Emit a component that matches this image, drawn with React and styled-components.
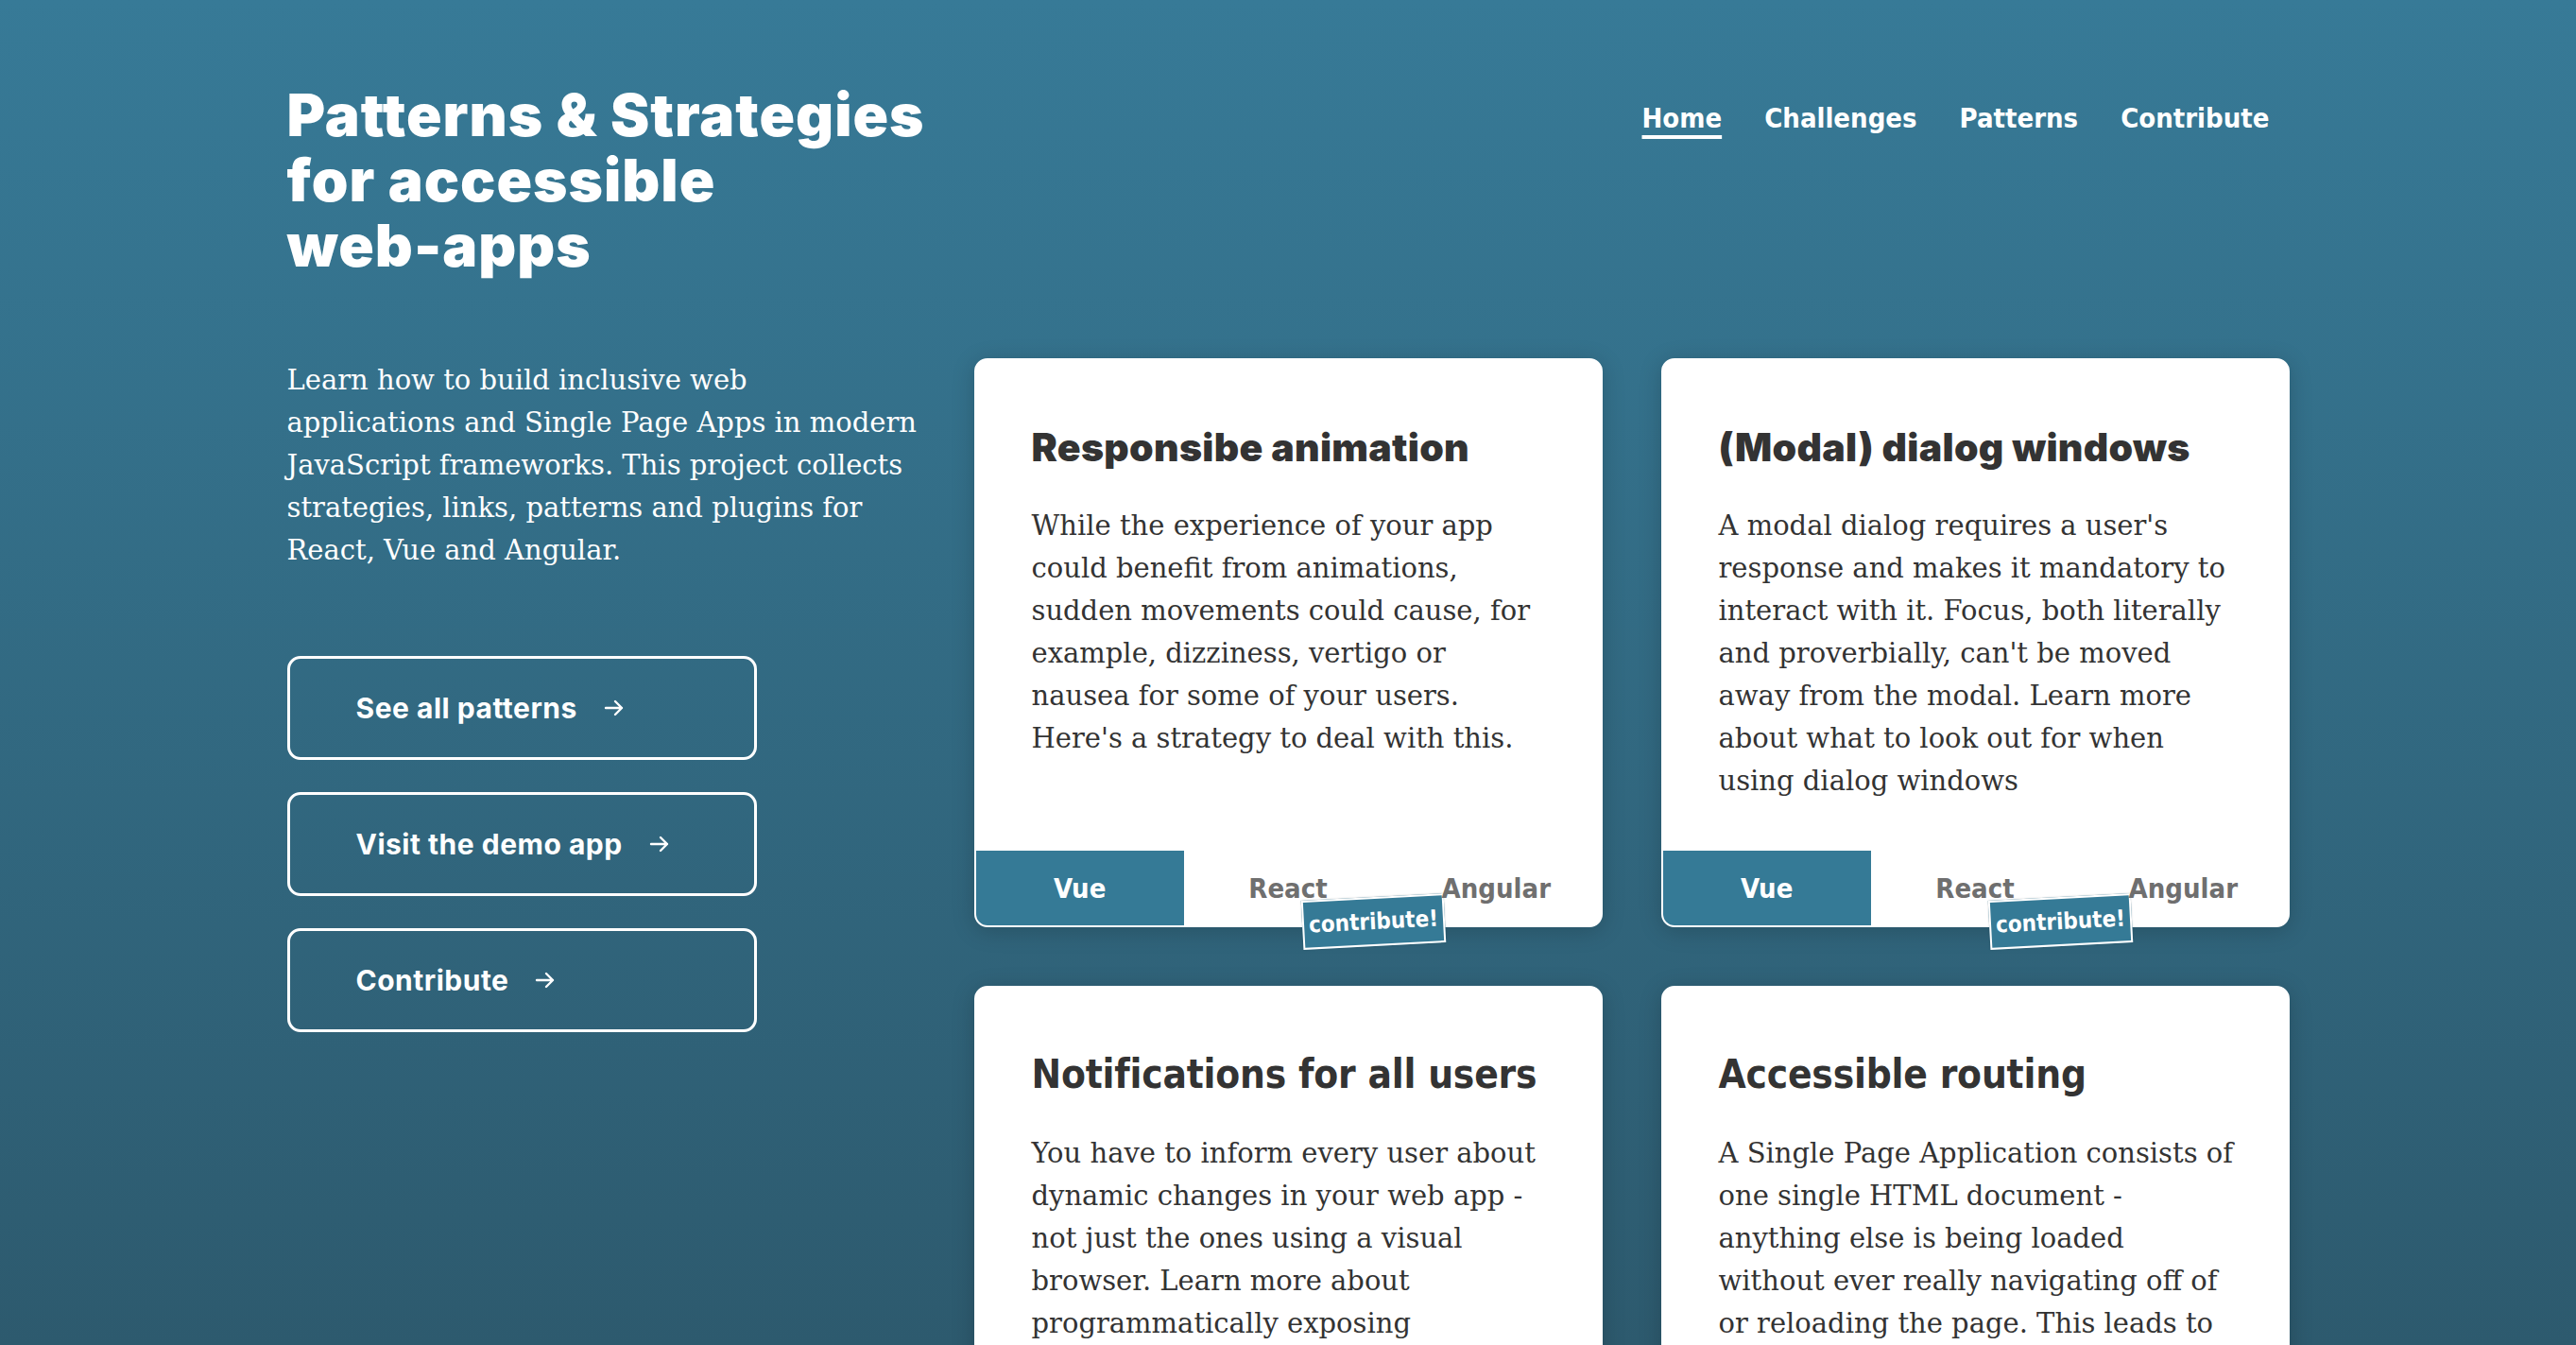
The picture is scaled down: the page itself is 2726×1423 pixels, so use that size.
import React from "react";
import styled, { createGlobalStyle } from "styled-components";

const GlobalStyle = createGlobalStyle`
  html, body { margin: 0; padding: 0; }
  body {
    font-family: "DejaVu Serif", "Liberation Serif", serif;
    background: #2d5a6e;
  }
  * { box-sizing: border-box; }
`;

const Page = styled.div`
  min-height: 100vh;
  background: linear-gradient(180deg, #377a97 0px, #2d5a6e 1423px);
  padding-bottom: 120px;
`;

const Container = styled.div`
  width: 2119px;
  margin: 0 auto;
  display: grid;
  grid-template-columns: 665px 665px 665px;
  column-gap: 62px;
`;

const Header = styled.header`
  grid-column: 1 / -1;
  display: flex;
  justify-content: space-between;
  align-items: flex-start;
  padding-top: 87px;
  height: 379px;
`;

const Title = styled.h1`
  margin: 0;
  font-family: "Inter", "Lato", sans-serif;
  font-weight: 900;
  font-size: 62px;
  line-height: 69px;
  letter-spacing: 1px;
  color: #fff;
`;

const Nav = styled.nav`
  display: flex;
  gap: 45px;
  padding-right: 21px;
  padding-top: 18px;
`;

const NavLink = styled.a`
  font-family: "DejaVu Sans Condensed", "DejaVu Sans", sans-serif;
  font-weight: 700;
  font-size: 29px;
  line-height: 40px;
  color: #fff;
  text-decoration: ${(p) => (p.$active ? "underline" : "none")};
  text-decoration-thickness: 4px;
  text-underline-offset: 8px;
  cursor: pointer;
`;

const Intro = styled.section`
  display: flex;
  flex-direction: column;
`;

const Lead = styled.p`
  margin: 1px 0 0;
  font-size: 29px;
  line-height: 45px;
  color: #fff;
  white-space: nowrap;
`;

const Actions = styled.div`
  display: flex;
  flex-direction: column;
  gap: 34px;
  margin-top: 89px;
`;

const ActionButton = styled.a`
  display: flex;
  align-items: center;
  gap: 28px;
  width: 497px;
  height: 110px;
  padding-left: 70px;
  border: 3.5px solid #fff;
  border-radius: 14px;
  font-family: "Inter", "Lato", sans-serif;
  font-weight: 700;
  font-size: 30px;
  letter-spacing: 0.5px;
  color: #fff;
  text-decoration: none;
  cursor: pointer;
`;

const Cards = styled.div`
  grid-column: 2 / 4;
  display: grid;
  grid-template-columns: 665px 665px;
  column-gap: 62px;
  row-gap: 62px;
`;

const Card = styled.article`
  position: relative;
  display: flex;
  flex-direction: column;
  min-height: 602px;
  background: #fff;
  border: 2px solid #fff;
  border-radius: 14px;
  box-shadow: 0 4px 24px rgba(0, 0, 0, 0.18);
`;

const CardBody = styled.div`
  padding: 66px 59px 50px;
  flex: 1;
`;

const CardTitle = styled.h2`
  margin: 0;
  font-family: ${(p) =>
    p.$narrow
      ? `"DejaVu Sans Condensed", "DejaVu Sans", sans-serif`
      : `"Inter", "Lato", sans-serif`};
  font-weight: ${(p) => (p.$narrow ? 700 : 900)};
  font-size: ${(p) => (p.$narrow ? "42px" : "41px")};
  line-height: 52px;
  letter-spacing: ${(p) => (p.$narrow ? "-0.2px" : "0.3px")};
  color: #333;
`;

const CardText = styled.p`
  margin: 35px 0 0;
  font-size: 29px;
  line-height: 45px;
  color: #333;
  white-space: nowrap;
`;

const Tabs = styled.div`
  display: grid;
  grid-template-columns: 1fr 1fr 1fr;
  height: 79px;
`;

const Tab = styled.div`
  position: relative;
  display: flex;
  align-items: center;
  justify-content: center;
  font-family: "DejaVu Sans Condensed", "DejaVu Sans", sans-serif;
  font-weight: 700;
  font-size: 29px;
  color: ${(p) => (p.$active ? "#fff" : "#6f6f6f")};
  background: ${(p) => (p.$active ? "#357a96" : "transparent")};
  border-bottom-left-radius: ${(p) => (p.$active ? "12px" : "0")};
`;

const Badge = styled.span`
  position: absolute;
  left: 125px;
  top: 49px;
  width: 151px;
  height: 52px;
  display: flex;
  align-items: center;
  justify-content: center;
  background: #357a96;
  border: 2px solid #fff;
  color: #fff;
  font-family: "DejaVu Sans Condensed", "DejaVu Sans", sans-serif;
  font-weight: 700;
  font-size: 24px;
  transform: rotate(-3deg);
  box-shadow: 0 0 2px rgba(0, 0, 0, 0.2);
`;

const Arrow = () => (
  <svg width="22" height="20" viewBox="0 0 22 20" fill="none" stroke="#fff" strokeWidth="2.4" strokeLinecap="round" strokeLinejoin="round">
    <path d="M2 10h17M12 3l7 7-7 7" />
  </svg>
);

const cards = [
  {
    title: "Responsibe animation",
    lines: [
      "While the experience of your app",
      "could benefit from animations,",
      "sudden movements could cause, for",
      "example, dizziness, vertigo or",
      "nausea for some of your users.",
      "Here's a strategy to deal with this.",
    ],
  },
  {
    title: "(Modal) dialog windows",
    lines: [
      "A modal dialog requires a user's",
      "response and makes it mandatory to",
      "interact with it. Focus, both literally",
      "and proverbially, can't be moved",
      "away from the modal. Learn more",
      "about what to look out for when",
      "using dialog windows",
    ],
  },
  {
    title: "Notifications for all users",
    narrow: true,
    lines: [
      "You have to inform every user about",
      "dynamic changes in your web app -",
      "not just the ones using a visual",
      "browser. Learn more about",
      "programmatically exposing",
      "notifications to assistive",
      "technologies.",
    ],
  },
  {
    title: "Accessible routing",
    narrow: true,
    lines: [
      "A Single Page Application consists of",
      "one single HTML document -",
      "anything else is being loaded",
      "without ever really navigating off of",
      "or reloading the page. This leads to",
      "new challenges for users of",
      "assistive technologies.",
    ],
  },
];

const withBreaks = (lines) =>
  lines.map((l, i) => (
    <React.Fragment key={i}>
      {l}
      {i < lines.length - 1 && <br />}
    </React.Fragment>
  ));

export default function App() {
  return (
    <>
      <GlobalStyle />
      <Page>
        <Container>
          <Header>
            <Title>
              Patterns &amp; Strategies
              <br />
              for accessible
              <br />
              web-apps
            </Title>
            <Nav>
              <NavLink $active>Home</NavLink>
              <NavLink>Challenges</NavLink>
              <NavLink>Patterns</NavLink>
              <NavLink>Contribute</NavLink>
            </Nav>
          </Header>
          <Intro>
            <Lead>
              {withBreaks([
                "Learn how to build inclusive web",
                "applications and Single Page Apps in modern",
                "JavaScript frameworks. This project collects",
                "strategies, links, patterns and plugins for",
                "React, Vue and Angular.",
              ])}
            </Lead>
            <Actions>
              <ActionButton>
                See all patterns <Arrow />
              </ActionButton>
              <ActionButton>
                Visit the demo app <Arrow />
              </ActionButton>
              <ActionButton>
                Contribute <Arrow />
              </ActionButton>
            </Actions>
          </Intro>
          <Cards>
            {cards.map((c) => (
              <Card key={c.title}>
                <CardBody>
                  <CardTitle $narrow={c.narrow}>{c.title}</CardTitle>
                  <CardText>{withBreaks(c.lines)}</CardText>
                </CardBody>
                <Tabs>
                  <Tab $active>Vue</Tab>
                  <Tab>
                    React
                    <Badge>contribute!</Badge>
                  </Tab>
                  <Tab>Angular</Tab>
                </Tabs>
              </Card>
            ))}
          </Cards>
        </Container>
      </Page>
    </>
  );
}
